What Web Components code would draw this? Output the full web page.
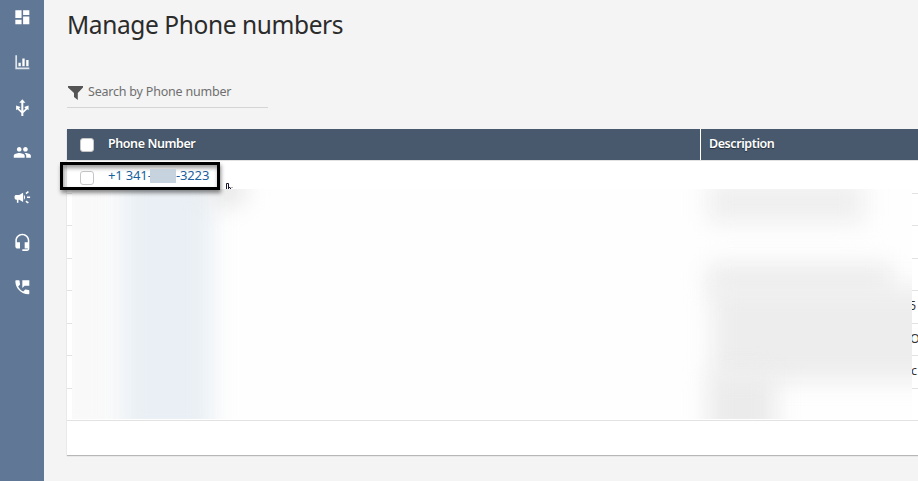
<!DOCTYPE html>
<html lang="en">
<head>
<meta charset="utf-8">
<title>Manage Phone numbers</title>
<style>
  html, body { margin: 0; height: 100%; }
  body {
    background: #f4f4f4;
    color: #2b2b2b;
    font-family: "Noto Sans", "Open Sans", sans-serif;
    font-size: 13px;
    overflow: hidden;
  }
</style>
</head>
<body>
<app-shell>
  <side-nav slot="nav"></side-nav>
  <page-title>Manage Phone numbers</page-title>
  <filter-field>Search by Phone number</filter-field>
  <phone-table></phone-table>
</app-shell>

<script>
// Small helper so every element sets up its shadow root the same way
class BaseElement extends HTMLElement {
  connectedCallback() {
    this.attachShadow({ mode: 'open' }).innerHTML = this.template();
  }
}

// 1. Page frame
class AppShell extends BaseElement {
  template() {
    return `
    <style>
      :host { display: flex; height: 100vh; overflow: hidden; }
      main { flex: 1; min-width: 0; padding-left: 23px; display: flex; flex-direction: column; }
    </style>
    <slot name="nav"></slot>
    <main><slot></slot></main>
    `;
  }
}
customElements.define('app-shell', AppShell);

// 2. Left icon bar
const navIcons = [
  '<path d="M3 13h8V3H3v10zm0 8h8v-6H3v6zm10 0h8V11h-8v10zm0-18v6h8V3h-8z"/>',
  '<path opacity=".8" d="M3 3h2.200v15.800H21V21H3z"/><path d="M7 12.500h3V17H7zM12 7h3v10h-3zM17 9h3v8h-3z"/>',
  '<path d="M12 1.500L8 6h2.700v10.500L7.800 13.500l1.900-2L4 9.500v6.300l1.600-1.400 5.100 5V23h2.600v-3.600l5.100-5 1.600 1.400V9.500l-5.700 2 1.900 2-2.900 3V6H16z"/>',
  '<path d="M16 11c1.660 0 2.990-1.340 2.990-3S17.660 5 16 5c-1.660 0-3 1.340-3 3s1.340 3 3 3zm-8 0c1.660 0 2.990-1.340 2.990-3S9.660 5 8 5C6.340 5 5 6.340 5 8s1.340 3 3 3zm0 2c-2.330 0-7 1.170-7 3.500V19h14v-2.500c0-2.330-4.670-3.500-7-3.500zm8 0c-.29 0-.62.02-.97.05 1.160.84 1.970 1.970 1.970 3.450V19h6v-2.500c0-2.330-4.670-3.500-7-3.500z"/>',
  '<path d="M18 11v2h4v-2h-4zM16 17.610c.96.71 2.210 1.650 3.200 2.390.4-.53.8-1.070 1.200-1.600-.99-.74-2.240-1.680-3.200-2.400-.4.54-.8 1.080-1.200 1.610zM20.400 5.600c-.4-.53-.8-1.070-1.200-1.600-.99.74-2.240 1.680-3.200 2.400.4.53.8 1.070 1.200 1.600.96-.72 2.210-1.650 3.200-2.400zM4 9c-1.100 0-2 .9-2 2v2c0 1.100.9 2 2 2h1v4h2v-4h1l5 3V6L8 9H4zm11.500 3c0-1.330-.58-2.530-1.500-3.350v6.690c.92-.81 1.500-2.010 1.500-3.340z"/>',
  '<path d="M12 1c-4.970 0-9 4.030-9 9v7c0 1.660 1.340 3 3 3h3v-8H5v-2c0-3.870 3.130-7 7-7s7 3.130 7 7v2h-4v8h4v1h-7v2h6c1.660 0 3-1.340 3-3V10c0-4.970-4.030-9-9-9z"/>',
  '<path d="M20 15.500c-1.250 0-2.450-.2-3.570-.57-.35-.11-.74-.03-1.020.24l-2.200 2.200c-2.830-1.440-5.150-3.750-6.590-6.580l2.200-2.210c.28-.27.36-.66.25-1.010C8.700 6.450 8.500 5.250 8.500 4c0-.55-.45-1-1-1H4c-.55 0-1 .45-1 1 0 9.390 7.610 17 17 17 .55 0 1-.45 1-1v-3.500c0-.55-.45-1-1-1zM12 3v10l3-3h6V3h-9z"/>'
];

class SideNav extends BaseElement {
  template() {
    return `
    <style>
      :host { display: block; width: 44px; background: #607896; }
      nav { display: flex; flex-direction: column; align-items: center; padding-top: 7.670px; gap: 26.330px; }
      svg { display: block; width: 18.670px; height: 18.670px; fill: #fff; }
    </style>
    <nav>${navIcons.map(icon => `<svg viewBox="0 0 24 24">${icon}</svg>`).join('')}</nav>
    `;
  }
}
customElements.define('side-nav', SideNav);

// 3. Heading
class PageTitle extends BaseElement {
  template() {
    return `
    <style>
      :host { display: block; height: 78px; }
      h1 { margin: 0; padding-top: 8px; font-size: 24.500px; line-height: 34px; font-weight: 400; letter-spacing: -0.4px; white-space: nowrap; }
    </style>
    <h1><slot></slot></h1>
    `;
  }
}
customElements.define('page-title', PageTitle);

// 4. Filter input
class FilterField extends BaseElement {
  template() {
    return `
    <style>
      :host { display: flex; align-items: center; width: 201px; height: 30px; box-sizing: border-box; border-bottom: 1px solid #d5d5d5; margin-bottom: 21px; color: #6f6f6f; font-size: 12.500px; white-space: nowrap; }
      svg { display: block; width: 15px; height: 14px; margin: 0 5px 0 1px; fill: #545454; }
      span { margin-top: -2px; letter-spacing: -0.21px; }
    </style>
    <svg viewBox="0 0 15 14"><path d="M0 0h15v1.500L9.800 7v7L6 11V7L0 1.500z"/></svg>
    <span><slot></slot></span>
    `;
  }
}
customElements.define('filter-field', FilterField);

// 5. Checkbox
class CheckBox extends BaseElement {
  template() {
    return `
    <style>
      :host { display: block; width: 14px; height: 14px; box-sizing: border-box; background: #fff; border: 1px solid #c6c6c6; border-radius: 3px; }
    </style>
    `;
  }
}
customElements.define('check-box', CheckBox);

// 6. Numbers table; everything below the first row is masked
const rows = [
  { number: '+1 341-', end: '-3223' },
  {}, {}, {},
  { tail: '5', offset: 209 },
  { tail: 'KO', offset: 203 },
  { tail: 'c', offset: 211 },
  {}
];

class PhoneTable extends BaseElement {
  template() {
    return `
    <style>
      :host { display: block; position: relative; height: 326px; background: #fff; box-shadow: 0 1px 1px rgba(0,0,0,0.25); }
      .row { display: grid; grid-template-columns: 41px 592px 1fr; align-items: center; box-sizing: border-box; height: 32px; border-bottom: 1px solid #e2e2e2; white-space: nowrap; }
      .row:nth-child(odd) { height: 33px; }
      .row.head { height: 32px; background: #48596e; color: #fff; font-weight: 600; font-size: 12.500px; letter-spacing: -0.42px; }
      .head span { text-shadow: 0 1px 1px rgba(0,0,0,0.5); margin-top: -2px; }
      .head .desc { box-sizing: border-box; height: 31px; line-height: 29px; margin: 0; padding-left: 8px; border-left: 1px solid #fff; }
      check-box { margin-left: 13px; margin-top: 1px; }
      .number { display: flex; align-items: center; color: #1a5f9e; font-size: 13px; margin-top: -4px; letter-spacing: -0.15px; }
      .number span:first-child { width: 42px; }
      .number i { width: 26px; height: 14px; background: #c6d3de; margin: 1px 0 0; z-index: 1; }
      .tail { color: #333; font-size: 12.500px; margin-top: -3px; letter-spacing: -0.6px; }
      .mask { position: absolute; left: 5px; top: 60px; width: 840px; height: 230px; overflow: hidden; background: #fefefe; }
      .mask b { position: absolute; filter: blur(11px); }
      .frame { position: absolute; left: -7px; top: 33px; width: 160px; height: 28px; box-sizing: border-box; border: 3px solid #000; box-shadow: 1px 3px 4px rgba(0,0,0,0.45), inset 1px 3px 4px rgba(0,0,0,0.4); }
      .cursor { position: absolute; left: 157px; top: 53px; width: 9px; height: 7px; }
    </style>
    <div class="row head"><check-box></check-box><span>Phone Number</span><span class="desc">Description</span></div>
    ${rows.map(row => this.row(row)).join('')}
    <div class="mask">
      <b style="left:-20px;top:-20px;width:62px;height:270px;background:#f9f9f9"></b>
      <b style="left:50px;top:-20px;width:90px;height:270px;background:#e9eff4"></b>
      <b style="left:136px;top:-14px;width:36px;height:30px;background:#e7e7e8"></b>
      <b style="left:636px;top:-8px;width:156px;height:42px;background:#efefef"></b>
      <b style="left:636px;top:74px;width:184px;height:34px;background:#eee"></b>
      <b style="left:640px;top:98px;width:230px;height:94px;background:#ededed"></b>
      <b style="left:636px;top:184px;width:68px;height:70px;background:#ebebeb"></b>
    </div>
    <div class="frame"></div>
    <svg class="cursor" viewBox="0 0 9 7"><path d="M2.500 7V1.500h2V7" fill="#fff" stroke="#16162e"/><path d="M5 5.500h1.500V7" fill="none" stroke="#16162e"/><path d="M6 5.500h3" stroke="#b8b8b8"/></svg>
    `;
  }

  row({ number, end, tail, offset }) {
    if (number) {
      return `<div class="row first"><check-box></check-box><div class="number"><span>${number}</span><i></i><span>${end}</span></div></div>`;
    }
    return `<div class="row"><span></span><span></span><span class="tail" style="padding-left:${offset || 0}px">${tail || ''}</span></div>`;
  }
}
customElements.define('phone-table', PhoneTable);
</script>
</body>
</html>
